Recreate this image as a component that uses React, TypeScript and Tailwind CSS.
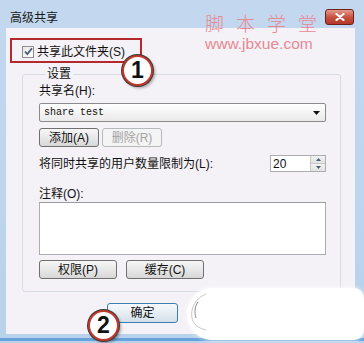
import React from 'react';

const cjk = "font-['Liberation_Sans','Noto_Sans_CJK_SC',sans-serif]";

const WinButton: React.FC<{ label: string; width: string; disabled?: boolean }> = ({
  label,
  width,
  disabled,
}) => (
  <div
    className={`${width} h-[19px] rounded-[3px] border flex items-center justify-center text-[12px] leading-none ${
      disabled
        ? 'border-[#b5b9bc] bg-[#f4f4f4] text-[#a3a3a3]'
        : 'border-[#707070] bg-gradient-to-b from-[#f6f6f6] via-[#e8e8e8] to-[#d7d7d7] text-[#111]'
    }`}
  >
    {label}
  </div>
);

const Badge: React.FC<{ n: string; className: string }> = ({ n, className }) => (
  <div
    className={`absolute ${className} w-[31px] h-[31px] rounded-full bg-white border-[2px] border-[#c0392b] ring-1 ring-[#3a3a3a] shadow-[2px_2px_3px_rgba(0,0,0,0.35)] flex items-center justify-center font-['Liberation_Sans',sans-serif] font-bold text-[23px] leading-none text-[#111]`}
  >
    {n}
  </div>
);

export default function App() {
  return (
    <div className={`relative w-[364px] h-[343px] overflow-hidden bg-gradient-to-b from-[#c3d8ef] to-[#b8d2ec] flex flex-col ${cjk}`}>
      {/* Title bar */}
      <div className="h-[28px] flex items-start justify-between pl-[10px] pr-[10px] pt-[9px]">
        <span className="mt-[2px] text-[12px] leading-[14px] text-[#1a1a1a]">高级共享</span>
        <div className="w-[29px] h-[16px] rounded-[3px] border border-[#6a2219] bg-gradient-to-b from-[#e39a8e] via-[#c9503f] to-[#b5382a] flex items-center justify-center">
          <svg width="10" height="8" viewBox="0 0 10 8">
            <path d="M1.5 1l7 6M8.5 1l-7 6" stroke="#fff" strokeWidth="2.2" strokeLinecap="round" />
          </svg>
        </div>
      </div>

      {/* Watermark */}
      <div className="absolute left-[205px] top-[14px] flex flex-col text-[#e88893]">
        <span className="text-[19px] leading-[22px] tracking-[12px] font-light">脚本学堂</span>
        <span className="font-['Liberation_Sans',sans-serif] text-[15.5px] leading-[16px]">www.jbxue.com</span>
      </div>

      {/* Dialog body */}
      <div className="ml-[6px] mr-[9px] h-[306px] bg-[#f5f2f7] flex flex-col text-[#111]">
        <div className="ml-[4px] mt-[10px] w-[132px] h-[25px] border-2 border-[#b4282e] flex items-center pl-[10px] gap-[3px]">
          <div className="w-[12px] h-[12px] border border-[#8e8f8f] bg-gradient-to-br from-[#e6e6e6] to-white flex items-center justify-center mt-[2px]">
            <svg width="9" height="9" viewBox="0 0 9 9">
              <path d="M1 4.5l2.3 2.5L8 1.2" stroke="#4a5d77" strokeWidth="1.8" fill="none" />
            </svg>
          </div>
          <span className="text-[12px] leading-[14px] mt-[2px]">共享此文件夹(S)</span>
        </div>

        <fieldset className="ml-[16px] mt-[3px] w-[319px] h-[226px] border border-[#d5dde3] rounded-[3px] pl-[16px] pr-[14px] flex flex-col">
          <legend className="ml-[6px] px-[2px] text-[12px] leading-[16px]">设置</legend>
          <span className="mt-[2px] text-[12px] leading-[14px]">共享名(H):</span>
          <div className="mt-[5px] h-[19px] rounded-[2px] border border-[#8b8b8b] bg-gradient-to-b from-white to-[#e9e9e9] flex items-center justify-between pl-[4px] pr-[5px]">
            <span className="font-['Liberation_Mono',monospace] text-[10px] leading-none text-[#111]">share test</span>
            <svg width="7" height="4" viewBox="0 0 7 4">
              <path d="M0 0h7L3.5 4z" fill="#111" />
            </svg>
          </div>
          <div className="mt-[6px] flex gap-[3px]">
            <WinButton label="添加(A)" width="w-[60px]" />
            <WinButton label="删除(R)" width="w-[60px]" disabled />
          </div>
          <div className="mt-[8px] h-[17px] flex items-center justify-between">
            <span className="text-[12px] leading-[14px]">将同时共享的用户数量限制为(L):</span>
            <div className="w-[56px] h-[17px] border border-[#abadb3] bg-white flex items-center justify-between">
              <span className="pl-[2px] font-['Liberation_Sans',sans-serif] text-[12px] leading-none">20</span>
              <div className="w-[15px] h-full flex flex-col border-l border-[#c8c8c8]">
                <div className="flex-1 bg-gradient-to-b from-[#f2f2f2] to-[#e2e2e2] flex items-center justify-center border-b border-[#c8c8c8]">
                  <svg width="5" height="3" viewBox="0 0 5 3"><path d="M0 3h5L2.5 0z" fill="#4a5d77" /></svg>
                </div>
                <div className="flex-1 bg-gradient-to-b from-[#f2f2f2] to-[#e2e2e2] flex items-center justify-center">
                  <svg width="5" height="3" viewBox="0 0 5 3"><path d="M0 0h5L2.5 3z" fill="#4a5d77" /></svg>
                </div>
              </div>
            </div>
          </div>
          <span className="mt-[15px] text-[12px] leading-[14px]">注释(O):</span>
          <div className="mt-[1px] h-[53px] border border-[#abadb3] border-t-[#9a9a9a] bg-white" />
          <div className="mt-[5px] flex gap-[9px]">
            <WinButton label="权限(P)" width="w-[78px]" />
            <WinButton label="缓存(C)" width="w-[78px]" />
          </div>
        </fieldset>

        <div className="ml-[101px] mt-[11px] w-[71px] h-[20px] rounded-[3px] border border-[#3c7fb1] bg-gradient-to-b from-[#f5f9fc] via-[#e6eef4] to-[#d3dfe8] flex items-center justify-center text-[12px] leading-none">
          确定
        </div>
      </div>
      <div className="mt-[4px] h-[3px] bg-[#69a2d8]" />

      {/* Annotations */}
      <Badge n="1" className="left-[122px] top-[55px]" />
      <Badge n="2" className="left-[88px] top-[310px]" />
      <div className="absolute left-[187px] top-[288px] w-[177px] h-[52px] rounded-l-[30px] rounded-r-[12px] bg-white shadow-[0_0_4px_rgba(255,255,255,0.9)]" />
      <svg className="absolute left-[188px] top-[292px]" width="24" height="40" viewBox="0 0 24 40">
        <path d="M18 2C8 6 2 16 4 26c1 6 6 10 14 12" stroke="#c8c8c8" strokeWidth="1" fill="none" />
        <path d="M10 10c-3 4-4 10-2 16" stroke="#8a8a8a" strokeWidth="1" fill="none" />
      </svg>
    </div>
  );
}
